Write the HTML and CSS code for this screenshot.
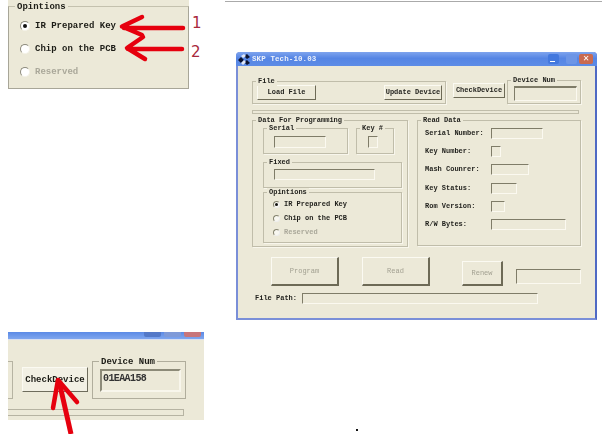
FILE: index.html
```html
<!DOCTYPE html>
<html lang="en">
<head>
<meta charset="utf-8">
<title>SKP Tech</title>
<link rel="stylesheet" href="styles.css">
</head>
<body>
<div class="topline"></div>
<div class="speck"></div>

<section class="crop crop-options">
  <div class="big-group">
    <span class="big-legend bt">Opintions</span>
    <div class="big-row"><span class="big-radio on"></span><span class="bt">IR Prepared Key</span></div>
    <div class="big-row"><span class="big-radio"></span><span class="bt">Chip on the PCB</span></div>
    <div class="big-row"><span class="big-radio"></span><span class="bt dim">Reserved</span></div>
  </div>
</section>

<section class="crop crop-check">
  <div class="crop-title">
    <span class="cb cb-min"></span><span class="cb cb-max"></span><span class="cb cb-close"></span>
  </div>
  <div class="crop-row">
    <div class="frag"></div>
    <div class="big-btn bt">CheckDevice</div>
    <div class="crop-dev">
      <span class="big-legend bt">Device Num</span>
      <div class="crop-input">01EAA158</div>
    </div>
  </div>
  <div class="crop-bar"></div>
</section>

<main class="win">
  <header class="title">
    <svg class="logo" width="12" height="11" viewBox="0 0 12 11"><path d="M0 6l3-3 3 3-3 3zM6 2l3-2 3 3-3 2zM6 8l3-2 3 3-3 2z" fill="#0c1430"/><path d="M3 2l3-2 2 2-3 2zM3 9l3-3 2 2-3 3z" fill="#dfe6f5"/></svg>
    <span class="title-text">SKP Tech-10.03</span>
    <span class="tb tb-min"></span><span class="tb tb-max"></span><span class="tb tb-close">✕</span>
  </header>
  <div class="body">
    <div class="row-top">
      <div class="grp g-file">
        <span class="lg t">File</span>
        <div class="btn b-load t">Load File</div>
        <div class="btn b-update t">Update Device</div>
      </div>
      <div class="btn b-check t">CheckDevice</div>
      <div class="grp g-dev">
        <span class="lg t">Device Num</span>
        <div class="in i-dev"></div>
      </div>
    </div>
    <div class="bar"></div>
    <div class="row-main">
      <div class="grp g-data">
        <span class="lg t">Data For Programming</span>
        <div class="pair">
          <div class="grp g-serial"><span class="lg t">Serial</span><div class="in i-serial"></div></div>
          <div class="grp g-key"><span class="lg t">Key #</span><div class="in i-key"></div></div>
        </div>
        <div class="grp g-fixed"><span class="lg t">Fixed</span><div class="in i-fixed"></div></div>
        <div class="grp g-opt">
          <span class="lg t">Opintions</span>
          <div class="radio-row"><span class="radio on"></span><span class="t">IR Prepared Key</span></div>
          <div class="radio-row"><span class="radio"></span><span class="t">Chip on the PCB</span></div>
          <div class="radio-row"><span class="radio"></span><span class="t dim">Reserved</span></div>
        </div>
      </div>
      <div class="grp g-read">
        <span class="lg t">Read Data</span>
        <div class="read-grid">
          <span class="t">Serial Number:</span><div class="in w52"></div>
          <span class="t">Key Number:</span><div class="in w10"></div>
          <span class="t">Mash Counrer:</span><div class="in w38"></div>
          <span class="t">Key Status:</span><div class="in w26"></div>
          <span class="t">Rom Version:</span><div class="in w14"></div>
          <span class="t">R/W Bytes:</span><div class="in w75"></div>
        </div>
      </div>
    </div>
    <div class="row-actions">
      <div class="btn b-program t off">Program</div>
      <div class="btn b-read t off">Read</div>
      <div class="btn b-renew t off">Renew</div>
      <div class="in i-renew"></div>
    </div>
    <div class="row-path">
      <span class="t path-label">File Path:</span>
      <div class="in i-path"></div>
    </div>
  </div>
</main>

<svg class="ink" width="602" height="434" viewBox="0 0 602 434" fill="none" stroke="#e6000e" stroke-width="4.500" stroke-linecap="round" stroke-linejoin="round">
  <path d="M183 28H124M142 17L122 26.500L142 35"/>
  <path d="M182 49H128M143 37L127 48L145 59"/>
  <path d="M59 381L71 434" stroke-linecap="butt" stroke-width="5"/>
  <path d="M53 408L58 380L77 402"/>
</svg>
<span class="num n1">1</span>
<span class="num n2">2</span>
</body>
</html>
```
FILE: styles.css
```css
html, body { margin: 0; padding: 0; }
body { width: 602px; height: 434px; background: #fff; position: relative; overflow: hidden; }

.topline { position: absolute; left: 225px; top: 1px; width: 377px; height: 1px; background: #aaa; }
.speck { position: absolute; left: 356px; top: 429px; width: 2px; height: 2px; background: #111; }

.t, .bt, .title-text, .crop-input { font-family: "Liberation Mono", monospace; white-space: nowrap; }
.t { font-size: 7px; line-height: 9px; font-weight: 700; color: #1f1f1b; }
.bt { font-size: 9px; line-height: 12px; font-weight: 700; color: #1c1c16; }
.t.dim, .bt.dim { color: #aaa89a; }
.t.off { color: #a3a192; font-weight: 400; }

/* top-left crop */
.crop { position: absolute; background: #ece9d8; filter: blur(.4px); }
.crop-options { left: 8px; top: 0; width: 181px; height: 89px; }
.big-group { box-sizing: border-box; position: relative; margin-top: 6px; height: 83px; border: 1px solid #a8a698; border-top-color: #c4c1ae; padding-top: 7px; }
.big-legend { position: absolute; left: 6px; top: -6px; padding: 0 2px; background: #ece9d8; }
.big-row { display: flex; align-items: center; gap: 5px; height: 23px; padding-left: 11px; }
.big-radio { box-sizing: border-box; width: 10px; height: 10px; border-radius: 50%; background: #fff; border: 1px solid; border-color: #8c8a7c #f4f2e8 #f4f2e8 #8c8a7c; display: flex; align-items: center; justify-content: center; }
.big-radio.on::after { content: ""; width: 4px; height: 4px; border-radius: 50%; background: #111; }

/* bottom-left crop */
.crop-check { left: 8px; top: 332px; width: 196px; height: 88px; }
.crop-title { display: flex; justify-content: flex-end; gap: 3px; height: 7px; padding-right: 3px; background: linear-gradient(#5b8ae6, #7fa6ee); border-bottom: 1px solid #d9dff0; }
.cb { width: 17px; height: 5px; border-radius: 0 0 2px 2px; }
.cb-min { background: #5479c8; }
.cb-max { background: #7f9ad8; }
.cb-close { background: #c8757a; }
.crop-row { display: flex; margin-top: 21px; height: 38px; }
.frag { width: 5px; height: 38px; box-sizing: border-box; border: 1px solid #b6b3a2; border-left: 0; }
.big-btn { box-sizing: border-box; width: 66px; height: 25px; margin: 6px 0 0 9px; display: flex; align-items: center; justify-content: center; background: #f2f0e4; border: 1px solid; border-color: #fbfaf2 #6e6c5c #6e6c5c #fbfaf2; }
.crop-dev { position: relative; box-sizing: border-box; width: 94px; height: 38px; margin-left: 4px; border: 1px solid #b0ad9c; padding: 7px 4px 0 7px; }
.crop-input { box-sizing: border-box; height: 23px; border: 2px solid; border-color: #8c8a78 #f8f6ec #f8f6ec #8c8a78; font-size: 10px; font-weight: 700; line-height: 16px; letter-spacing: -.6px; color: #333; padding-left: 1px; }
.crop-bar { box-sizing: border-box; width: 176px; height: 7px; margin-top: 10px; border: 1px solid #b6b3a2; border-left: 0; }

/* main window */
.win { position: absolute; left: 236px; top: 52px; width: 361px; height: 268px; box-sizing: border-box; border: 2px solid #7a8fd8; border-top: 0; border-right-color: #4f69c4; border-radius: 4px 4px 0 0; background: #ece9d8; filter: blur(.4px); }
.title { height: 14px; margin: 0 -2px; display: flex; align-items: center; padding: 0 4px 0 2px; border-radius: 4px 4px 0 0; background: linear-gradient(#7ea4ee, #5585e4 45%, #5d8ce6); }
.logo { flex: none; margin-right: 2px; }
.title-text { font-size: 7.500px; font-weight: 700; letter-spacing: .1px; color: #eef2fb; flex: 1; }
.tb { width: 11px; height: 10px; margin-left: 6px; border-radius: 2px; display: flex; align-items: center; justify-content: center; font: 700 8px/10px "DejaVu Sans", sans-serif; color: #fff; }
.tb-min { background: linear-gradient(transparent 70%, #fff 70%, #fff 85%, transparent 85%) no-repeat 2px 0 / 5px 100%, #4378de; }
.tb-max { background: #6c95e6; margin-left: 7px; }
.tb-close { width: 14px; background: #c96a50; margin-left: 2px; }

.body { padding: 14px 14px 0 14px; }
.grp { position: relative; box-sizing: border-box; border: 1px solid #c0bdaa; box-shadow: 1px 1px 0 #f8f6ec; }
.lg { position: absolute; left: 3px; top: -5px; padding: 0 2px; background: #ece9d8; }

.in { box-sizing: border-box; border: 1px solid; border-color: #7f7c68 #fbf9f0 #fbf9f0 #7f7c68; background: #ece9d8; }
.btn { box-sizing: border-box; display: flex; align-items: center; justify-content: center; background: #ece9d8; border: 1px solid; border-color: #fbfaf2 #6d6a56 #6d6a56 #fbfaf2; }

.row-top { display: flex; align-items: flex-start; height: 24px; }
.g-file { width: 194px; height: 23px; margin-top: 1px; display: flex; justify-content: space-between; align-items: flex-start; padding: 3px 3px 0 4px; }
.b-load { width: 59px; height: 15px; }
.b-update { width: 58px; height: 15px; }
.b-check { width: 52px; height: 15px; margin: 3px 0 0 7px; }
.g-dev { width: 74px; height: 24px; margin-left: 2px; padding: 5px 3px 0 6px; }
.i-dev { height: 15px; border-width: 2px 1px 1px 1px; }

.bar { box-sizing: border-box; width: 327px; height: 4px; margin-top: 6px; border: 1px solid #c0bdaa; }

.row-main { display: flex; gap: 9px; margin-top: 6px; }
.g-data { width: 156px; height: 127px; padding: 7px 0 0 10px; }
.pair { display: flex; gap: 8px; }
.g-serial { width: 85px; height: 26px; padding: 7px 0 0 10px; }
.i-serial { width: 52px; height: 12px; }
.g-key { width: 38px; height: 26px; padding: 7px 0 0 11px; }
.i-key { width: 10px; height: 12px; }
.g-fixed { width: 139px; height: 26px; margin-top: 8px; padding: 6px 0 0 10px; }
.i-fixed { width: 101px; height: 11px; }
.g-opt { width: 139px; height: 51px; margin-top: 4px; padding-top: 4px; }
.radio-row { display: flex; align-items: center; gap: 4px; height: 14px; padding-left: 9px; }
.radio { box-sizing: border-box; width: 7px; height: 7px; border-radius: 50%; background: #f8f7f0; border: 1px solid; border-color: #85836f #eee #eee #85836f; display: flex; align-items: center; justify-content: center; }
.radio.on::after { content: ""; width: 3px; height: 3px; border-radius: 50%; background: #111; }

.g-read { width: 164px; height: 126px; padding: 7px 0 0 7px; }
.read-grid { display: grid; grid-template-columns: 66px auto; grid-auto-rows: 11px; row-gap: 7.200px; align-items: center; justify-items: start; }
.read-grid .in { height: 11px; }
.w52 { width: 52px; }
.w10 { width: 10px; }
.w38 { width: 38px; }
.w26 { width: 26px; }
.w14 { width: 14px; }
.w75 { width: 75px; }

.row-actions { display: flex; align-items: flex-end; height: 29px; margin-top: 10px; padding-left: 19px; }
.b-program, .b-read { width: 68px; height: 29px; border-width: 1px 2px 2px 1px; }
.b-read { margin-left: 23px; }
.b-renew { width: 41px; height: 25px; margin-left: 32px; border-width: 1px 2px 2px 1px; }
.i-renew { width: 65px; height: 15px; margin: 0 0 2px 13px; }
.row-path { display: flex; align-items: center; height: 11px; margin-top: 7px; padding-left: 3px; }
.path-label { width: 47px; }
.i-path { width: 236px; height: 11px; }

/* hand-drawn annotations lying over the crops */
.ink { position: absolute; left: 0; top: 0; pointer-events: none; }
.num { position: absolute; font: 400 15px/15px "DejaVu Sans", sans-serif; color: #a8283c; }
.n1 { left: 192px; top: 16px; }
.n2 { left: 191px; top: 45px; }
```
